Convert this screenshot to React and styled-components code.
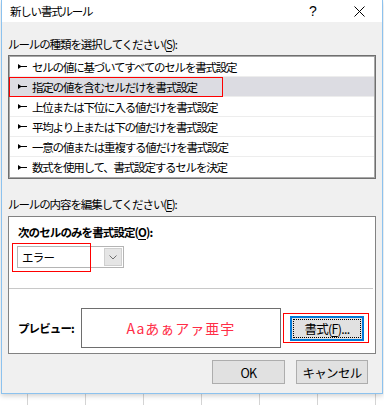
import styled, { createGlobalStyle } from 'styled-components';

const GlobalStyle = createGlobalStyle`
    html, body {
        margin: 0;
        padding: 0;
    }
    body {
        width: 384px;
        height: 405px;
        overflow: hidden;
        background-color: #fff;
        background-image: repeating-linear-gradient(
            to right,
            transparent 0,
            transparent 27px,
            #d4d4d4 27px,
            #d4d4d4 28px,
            transparent 28px,
            transparent 58px
        );
        font-family: "Noto Sans CJK JP", "Noto Sans", sans-serif;
        color: #000;
    }
`;

const Dialog = styled.div`
    box-sizing: border-box;
    width: 382px;
    height: 394px;
    margin-left: 1px;
    border: 1px solid #8cc2ee;
    border-top: none;
    background: #f0f0f0;
    box-shadow: 0 2px 5px rgba(0, 0, 0, 0.18);
    display: flex;
    flex-direction: column;
`;

const TitleBar = styled.div`
    height: 22px;
    background: #fff;
    display: flex;
    align-items: center;
    padding-left: 8px;
    font-size: 11.5px;
    letter-spacing: -1.2px;
    .title {
        flex: 1;
    }
`;

const TitleButton = styled.div`
    width: 46px;
    height: 22px;
    display: flex;
    align-items: center;
    justify-content: center;
    font-family: "Liberation Sans", sans-serif;
    font-size: 14px;
    letter-spacing: 0;
`;

const Body = styled.div`
    flex: 1;
    padding: 0 6px;
    display: flex;
    flex-direction: column;
`;

const SectionLabel = styled.div`
    margin-top: ${(p) => p.$top}px;
    margin-bottom: ${(p) => p.$bottom}px;
    height: 16px;
    line-height: 16px;
    font-size: 11.5px;
    letter-spacing: -1.1px;
    white-space: nowrap;
    u {
        text-underline-offset: 2px;
    }
`;

const RuleList = styled.div`
    border: 1px solid #6f6f6f;
    box-shadow: inset 0 0 0 1px #a8a8a8;
    padding: 1px;
    background: #fff;
`;

const RuleRow = styled.div`
    position: relative;
    box-sizing: border-box;
    height: 20px;
    display: flex;
    align-items: center;
    gap: 5px;
    padding-left: 8px;
    font-size: 11.5px;
    letter-spacing: -1.2px;
    white-space: nowrap;
    background: ${(p) => (p.$selected ? '#dcdce2' : '#fff')};
    border-bottom: 1px solid #ededed;
    &:last-child {
        border-bottom: none;
    }
`;

const Mark = styled.div`
    position: absolute;
    left: ${(p) => p.$left}px;
    top: ${(p) => p.$top}px;
    width: ${(p) => p.$width}px;
    height: ${(p) => p.$height}px;
    box-sizing: border-box;
    border: 1px solid #ff0000;
    pointer-events: none;
`;

const EditBox = styled.div`
    border: 1px solid #828282;
    background: #fff;
    padding-bottom: 5px;
`;

const EditTop = styled.div`
    padding: 7px 0 0 9px;
`;

const BoldLabel = styled.div`
    height: 16px;
    line-height: 16px;
    font-size: 11.5px;
    font-weight: 700;
    letter-spacing: -0.9px;
    u {
        text-underline-offset: 2px;
    }
`;

const Select = styled.div`
    position: relative;
    box-sizing: border-box;
    margin-top: 6px;
    margin-left: -1px;
    width: 107px;
    height: 22px;
    border: 1px solid #b4b4b4;
    display: flex;
    align-items: stretch;
    .value {
        flex: 1;
        display: flex;
        align-items: center;
        padding-left: 4px;
        font-size: 11.5px;
        letter-spacing: -0.8px;
    }
    .arrow {
        width: 16px;
        margin: 1px;
        background: #e5e5e5;
        border: 1px solid #cfcfcf;
        display: flex;
        align-items: center;
        justify-content: center;
    }
`;

const Rule = styled.div`
    height: 1px;
    margin: 20px 2px 0 0;
    background: #c8c8c8;
`;

const PreviewRow = styled.div`
    display: flex;
    align-items: center;
    margin-top: 19px;
    padding-left: 9px;
    .label {
        width: 63px;
        font-size: 11.5px;
        font-weight: 700;
        letter-spacing: -0.9px;
    }
`;

const PreviewBox = styled.div`
    box-sizing: border-box;
    width: 200px;
    height: 40px;
    border: 1px solid #6e6e6e;
    display: flex;
    align-items: center;
    justify-content: center;
    color: #ff2d47;
    font-size: 14px;
    letter-spacing: 1px;
`;

const ButtonMark = styled.div`
    box-sizing: border-box;
    margin-left: 2px;
    width: 86px;
    height: 30px;
    border: 1px solid #ff0000;
    padding: 2px 4px 1px 6px;
    display: flex;
    align-items: center;
`;

const Button = styled.div`
    box-sizing: border-box;
    width: ${(p) => p.$width}px;
    height: ${(p) => p.$height}px;
    background: #e1e1e1;
    border: ${(p) => (p.$focused ? '2px solid #0078d7' : '1px solid #adadad')};
    outline: ${(p) => (p.$focused ? '1px dotted #000' : 'none')};
    outline-offset: -4px;
    display: flex;
    align-items: center;
    justify-content: center;
    font-size: 12.5px;
    letter-spacing: -0.7px;
    u {
        text-underline-offset: 2px;
    }
`;

const ButtonRow = styled.div`
    display: flex;
    justify-content: flex-end;
    gap: 11px;
    margin-top: 6px;
    padding-right: 8px;
`;

function Pointer() {
    return (
        <svg width="9" height="5" viewBox="0 0 9 5">
            <path d="M0 0 L3 2 L9 2 L9 3 L3 3 L0 5 Z" fill="#000" />
        </svg>
    );
}

const rules = [
    'セルの値に基づいてすべてのセルを書式設定',
    '指定の値を含むセルだけを書式設定',
    '上位または下位に入る値だけを書式設定',
    '平均より上または下の値だけを書式設定',
    '一意の値または重複する値だけを書式設定',
    '数式を使用して、書式設定するセルを決定',
];

export default function App() {
    return (
        <>
            <GlobalStyle />
            <Dialog>
                <TitleBar>
                    <span className="title">新しい書式ルール</span>
                    <TitleButton>?</TitleButton>
                    <TitleButton>
                        <svg width="11" height="11" viewBox="0 0 11 11">
                            <path
                                d="M0.5 0.5 L10.5 10.5 M10.5 0.5 L0.5 10.5"
                                stroke="#000"
                                strokeWidth="1"
                            />
                        </svg>
                    </TitleButton>
                </TitleBar>
                <Body>
                    <SectionLabel $top={14} $bottom={3}>
                        ルールの種類を選択してください(<u>S</u>):
                    </SectionLabel>
                    <RuleList>
                        {rules.map((rule, i) => (
                            <RuleRow key={rule} $selected={i === 1}>
                                <Pointer />
                                <span>{rule}</span>
                                {i === 1 && (
                                    <Mark
                                        $left={-1}
                                        $top={0}
                                        $width={214}
                                        $height={20}
                                    />
                                )}
                            </RuleRow>
                        ))}
                    </RuleList>
                    <SectionLabel $top={17} $bottom={4}>
                        ルールの内容を編集してください(<u>E</u>):
                    </SectionLabel>
                    <EditBox>
                        <EditTop>
                            <BoldLabel>
                                次のセルのみを書式設定(<u>O</u>):
                            </BoldLabel>
                            <Select>
                                <div className="value">エラー</div>
                                <div className="arrow">
                                    <svg width="8" height="5" viewBox="0 0 8 5">
                                        <path
                                            d="M0.5 0.5 L4 4 L7.5 0.5"
                                            stroke="#707070"
                                            fill="none"
                                        />
                                    </svg>
                                </div>
                                <Mark
                                    $left={-6}
                                    $top={-4}
                                    $width={79}
                                    $height={29}
                                />
                            </Select>
                        </EditTop>
                        <Rule />
                        <PreviewRow>
                            <span className="label">プレビュー:</span>
                            <PreviewBox>Aaあぁアァ亜宇</PreviewBox>
                            <ButtonMark>
                                <Button $width={74} $height={25} $focused>
                                    書式(<u>F</u>)...
                                </Button>
                            </ButtonMark>
                        </PreviewRow>
                    </EditBox>
                    <ButtonRow>
                        <Button $width={73} $height={24}>
                            OK
                        </Button>
                        <Button $width={72} $height={24}>
                            キャンセル
                        </Button>
                    </ButtonRow>
                </Body>
            </Dialog>
        </>
    );
}
